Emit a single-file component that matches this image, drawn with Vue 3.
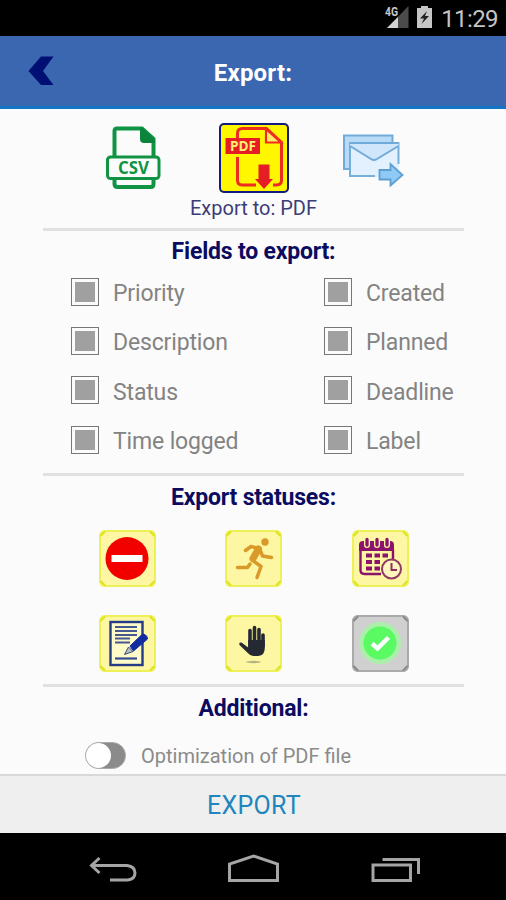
<template>
  <div class="screen">
    <div class="status-bar">
      <svg class="signal" width="26" height="24" viewBox="0 0 26 24">
        <path d="M24.500 0V22H3Z" fill="#4b4b4b" />
        <path d="M14 11V22H3Z" fill="#d4d4d4" />
        <text class="net" x="1" y="10" textLength="13" lengthAdjust="spacingAndGlyphs">4G</text>
      </svg>
      <svg class="battery" width="15" height="24" viewBox="0 0 15 24">
        <path d="M0 2H4V0H11V2H15V22H0Z" fill="#c6c6c6" />
        <path d="M10 5L3 12.5H7L4.500 18L12 10H8Z" fill="#222" />
      </svg>
      <span class="clock">11:29</span>
    </div>

    <header class="header">
      <button class="back-btn">
        <svg width="26" height="30" viewBox="0 0 26 30">
          <path d="M13 0.5H25.5L15 15L25.5 29H13L0.5 15Z" fill="#000f73" />
        </svg>
      </button>
      <h1>Export:</h1>
    </header>

    <main class="content">
      <section class="formats">
        <div class="format-row">
          <button class="format" :class="{ active: format === 'CSV' }" @click="format = 'CSV'">
            <svg width="70" height="70" viewBox="1 0 70 70">
              <path d="M15.5 34V8q0-2.500 2.500-2.500H43L54.500 16V34M15.500 57V61q0 3 3 3H52q2.500 0 2.500-3V57" fill="none" stroke="#109443" stroke-width="4" />
              <path d="M41 5H44L56 17V20H45q-4 0-4-4Z" fill="#0b853b" />
              <rect x="8.500" y="34" width="51.500" height="21.500" rx="3" fill="#fcfcfc" stroke="#109443" stroke-width="3" />
              <text class="csv" x="19" y="51" textLength="31" lengthAdjust="spacingAndGlyphs">CSV</text>
            </svg>
          </button>
          <button class="format" :class="{ active: format === 'PDF' }" @click="format = 'PDF'">
            <svg width="70" height="70" viewBox="0 0 70 70">
              <path d="M18.500 15V10q0-4.500 5-4.500H47.500L62.500 19.500V57q0 5-5 5H54M37 62H23q-4.500 0-4.500-5V34" fill="none" stroke="#ee2c20" stroke-width="3" />
              <path d="M47 6V19.500H62Z" fill="#ffe96b" stroke="#ee2c20" stroke-width="2.200" />
              <rect x="6.500" y="15" width="34.500" height="16" fill="#e51e25" />
              <text class="pdf" x="11" y="28" textLength="26" lengthAdjust="spacingAndGlyphs">PDF</text>
              <path d="M39.500 41.500H50.500V56H54L45 66L36 56H39.500Z" fill="#e51e25" />
            </svg>
          </button>
          <button class="format" :class="{ active: format === 'Email' }" @click="format = 'Email'">
            <svg width="70" height="70" viewBox="1 0 70 70">
              <path d="M12 46H7V12.500H55.500V19" fill="#b8daf7" stroke="#71abd9" stroke-width="2" />
              <rect x="13" y="20" width="49" height="34" fill="#e3f1fe" />
              <path d="M38 53H13V20H61.500V41" fill="none" stroke="#76afd9" stroke-width="2" />
              <path d="M13 20H61.500V23L40 36q-3 2-6 0L13 23Z" fill="#cfe6fb" />
              <path d="M13 23L34 36q3 2 6 0L61.500 23" fill="none" stroke="#70aad8" stroke-width="2" />
              <path d="M13 20H61.500" stroke="#70aad8" stroke-width="2" />
              <path d="M42.500 47H53.500V41L65.500 52L53.500 62.500V56.500H42.500Z" fill="#8fcaf7" stroke="#5e9fd0" stroke-width="1.800" />
            </svg>
          </button>
        </div>
        <p class="format-label">Export to: {{ format }}</p>
      </section>

      <section class="fields">
        <h2>Fields to export:</h2>
        <div class="field-grid">
          <div v-for="field in fields" :key="field.name" class="field" @click="field.checked = !field.checked">
            <span class="checkbox"><i v-if="field.checked"></i></span>
            <span class="field-name">{{ field.name }}</span>
          </div>
        </div>
      </section>

      <section class="statuses">
        <h2>Export statuses:</h2>
        <div class="status-grid">
          <button
            v-for="status in statuses"
            :key="status.id"
            class="status"
            :class="{ selected: status.selected }"
            @click="status.selected = !status.selected"
          >
            <svg width="57" height="57" viewBox="0 0 57 57">
              <path class="corners" d="M1.500 6L6 1.500M51 1.500L55.500 6M1.500 51L6 55.500M51 55.500L55.500 51" />
              <g v-if="status.id === 'blocked'">
                <circle cx="28" cy="28.500" r="21.500" fill="#f20000" />
                <rect x="12.500" y="25" width="31" height="7" fill="#fff" />
              </g>
              <g v-else-if="status.id === 'running'" fill="none" stroke="#d99a2a" stroke-width="3.500" stroke-linecap="round" stroke-linejoin="round">
                <circle cx="40" cy="12" r="3.700" fill="#d99a2a" stroke="none" />
                <path d="M20.500 20.500L26 16.500L34.500 18.500L37.500 26L46.500 27.500" />
                <path d="M33.500 19L28 28.500" stroke-width="7" />
                <path d="M27 30L36 36.500L32 47.500M25 34L22.500 37.500H12.500" />
              </g>
              <g v-else-if="status.id === 'planned'">
                <path d="M7 15q0-4 4-4H38q4 0 4 4V21H7Z" fill="#8b136c" />
                <path d="M8.500 20V40q0 4 4 4H29M41 20V29" fill="none" stroke="#8b136c" stroke-width="2.400" />
                <path d="M15 9.500V15M25 9.500V15M35 9.500V15" stroke="#fff6a6" stroke-width="6" stroke-linecap="round" />
                <path d="M15 9.500V15M25 9.500V15M35 9.500V15" stroke="#8b136c" stroke-width="3.300" stroke-linecap="round" />
                <path d="M14 25.500H20M22.500 25.500H28M30.500 25.500H36M14 32H20M22.500 32H28M14 38.500H20M22.500 38.500H28" stroke="#8b136c" stroke-width="4" />
                <circle cx="39.500" cy="39" r="9.500" fill="#fff6bf" stroke="#8c3c62" stroke-width="2" />
                <path d="M39.500 33V40H45" fill="none" stroke="#8b3059" stroke-width="2" />
              </g>
              <g v-else-if="status.id === 'draft'">
                <rect x="11.500" y="7" width="32" height="43" fill="#fffbc8" stroke="#263b87" stroke-width="2.400" />
                <path d="M16 12H38M16 16H38M16 20H38M16 23.500H31M16 27.500H31" stroke="#46588f" stroke-width="2" />
                <path d="M16 43.500H38" stroke="#334b8f" stroke-width="2.200" />
                <path d="M31 31L43 19.500q1.500-1 3.500.5t2 4L34.500 36Z" fill="#102ca0" stroke="#102ca0" />
                <path d="M25.500 39.500L29.500 32L34 36.500Z" fill="#b8bfc9" stroke="#344c7d" />
              </g>
              <g v-else-if="status.id === 'paused'">
                <path d="M25 31V15.500M29.500 28V12.500M34 28V14.500M38 31V20" stroke="#252932" stroke-width="3.600" stroke-linecap="round" />
                <path d="M23.200 25H39.800V33q0 7.500-6.500 8h-5q-3 0-5.500-3L14.500 30q-1-3 2-2.500l6.700 5Z" fill="#252932" />
                <ellipse cx="28.500" cy="47" rx="7.500" ry="1.200" fill="#b6b483" />
              </g>
              <g v-else>
                <circle cx="28" cy="28" r="21" fill="#aaf0aa" />
                <circle cx="28" cy="28" r="16.500" fill="#59fa62" />
                <path d="M20 28.500L25.500 33.500L36.500 22.500" fill="none" stroke="#fff" stroke-width="4.500" />
              </g>
            </svg>
          </button>
        </div>
      </section>

      <section class="additional">
        <h2>Additional:</h2>
        <div class="option">
          <span class="switch" :class="{ on: optimize }" @click="optimize = !optimize"></span>
          <span class="option-name">Optimization of PDF file</span>
        </div>
      </section>
    </main>

    <button class="export-btn">EXPORT</button>

    <nav class="nav-bar">
      <svg width="506" height="66" viewBox="0 0 506 66" fill="none" stroke="#a5a5a5" stroke-width="3">
        <path d="M99.500 24L91.500 31.500L99.500 39M92 31.500H127q8 1 8 7.500q0 6-7 7H110" />
        <path d="M229.500 46.500V30L253.500 22L277.500 30V46.500Z" />
        <path d="M373 31H410.500V46.500H373ZM382.500 25.500H418.500V40" />
      </svg>
    </nav>
  </div>
</template>

<script setup>
import { ref } from 'vue';

const format = ref('PDF');
const optimize = ref(false);

// listed row by row, two per row
const fields = ref([
  { name: 'Priority', checked: true },
  { name: 'Created', checked: true },
  { name: 'Description', checked: true },
  { name: 'Planned', checked: true },
  { name: 'Status', checked: true },
  { name: 'Deadline', checked: true },
  { name: 'Time logged', checked: true },
  { name: 'Label', checked: true }
]);

const statuses = ref([
  { id: 'blocked', selected: true },
  { id: 'running', selected: true },
  { id: 'planned', selected: true },
  { id: 'draft', selected: true },
  { id: 'paused', selected: true },
  { id: 'done', selected: false }
]);
</script>

<style>
body {
  margin: 0;
  background: #000;
}
</style>

<style scoped>
.screen {
  width: 506px;
  height: 900px;
  display: flex;
  flex-direction: column;
  background: #fbfbfb;
  font-family: Roboto, "Liberation Sans", sans-serif;
  overflow: hidden;
}

button {
  padding: 0;
  border: none;
  background: none;
  font-family: inherit;
  cursor: pointer;
}

svg {
  display: block;
}

.status-bar {
  height: 36px;
  flex-shrink: 0;
  box-sizing: border-box;
  padding-right: 8px;
  display: flex;
  align-items: center;
  justify-content: flex-end;
  background: #000;
}

.net {
  font-size: 12px;
  font-weight: 700;
  fill: #c8c8c8;
}

.battery {
  margin-left: 7px;
}

.clock {
  margin-left: 9px;
  padding-top: 2px;
  font-size: 24px;
  line-height: 34px;
  letter-spacing: -0.6px;
  color: #c4c4c4;
}

.header {
  height: 73px;
  flex-shrink: 0;
  box-sizing: border-box;
  display: grid;
  grid-template-columns: 80px 1fr 80px;
  align-items: center;
  background: #3b67b1;
  border-bottom: 3px solid #1475c5;
}

.back-btn {
  padding-left: 28px;
}

.header h1 {
  margin: 0;
  padding-top: 3px;
  text-align: center;
  font-size: 24px;
  line-height: 30px;
  font-weight: 700;
  letter-spacing: 0.2px;
  color: #fff;
}

.content {
  flex: 1;
  padding: 0 42px 0 43px;
}

.formats,
.fields,
.statuses {
  box-sizing: border-box;
  border-bottom: 3px solid #e1e1e1;
}

.formats {
  height: 122px;
  padding-top: 14px;
}

.format-row {
  display: flex;
  justify-content: center;
  gap: 49px;
}

.format {
  width: 70px;
  height: 70px;
}

.format.active {
  background: #fff700;
  border-radius: 5px;
  box-shadow: inset 0 0 0 2px #111b80;
}

.csv {
  font-family: "Open Sans", sans-serif;
  font-size: 17px;
  font-weight: 700;
  fill: #109443;
}

.pdf {
  font-family: "Open Sans", sans-serif;
  font-size: 15px;
  font-weight: 700;
  fill: #ffef6e;
}

.format-label {
  margin: 3px 0 0;
  text-align: center;
  font-size: 20px;
  line-height: 24px;
  color: #3c3c78;
}

h2 {
  margin: 0;
  text-align: center;
  font-size: 23px;
  line-height: 28px;
  font-weight: 700;
  letter-spacing: -0.2px;
  color: #0b0b5f;
}

.fields {
  height: 245px;
  padding-top: 7px;
}

.field-grid {
  display: grid;
  grid-template-columns: 253px 1fr;
  grid-auto-rows: 49.3px;
  padding: 1px 0 0 28px;
}

.field {
  display: flex;
  align-items: center;
  gap: 14px;
}

.checkbox {
  width: 28px;
  height: 28px;
  box-sizing: border-box;
  border: 1px solid #777;
  display: flex;
  align-items: center;
  justify-content: center;
}

.checkbox i {
  width: 20px;
  height: 20px;
  background: #a0a0a0;
}

.field-name {
  padding-top: 5px;
  font-size: 23px;
  line-height: 28px;
  letter-spacing: -0.15px;
  white-space: nowrap;
  color: #838383;
}

.statuses {
  height: 211px;
  padding-top: 8px;
}

.status-grid {
  display: grid;
  grid-template-columns: repeat(3, 126.5px);
  grid-auto-rows: 57px;
  justify-content: center;
  justify-items: center;
  row-gap: 28px;
  padding-top: 18px;
}

.status {
  width: 57px;
  height: 57px;
  box-sizing: border-box;
  border-radius: 6px;
  background: #d0d0d0;
  box-shadow: inset 0 0 0 2px #aaa;
}

.status.selected {
  background: #fdf6a2;
  box-shadow: inset 0 0 0 2px #eef05a;
}

.corners {
  fill: none;
  stroke: #888;
  stroke-width: 2px;
}

.status.selected .corners {
  stroke: #dde51a;
}

.additional {
  padding-top: 8px;
}

.option {
  display: flex;
  align-items: center;
  gap: 15px;
  padding: 19px 0 0 42px;
}

.switch {
  width: 41px;
  height: 27px;
  box-sizing: border-box;
  border: 1px solid #aaa;
  border-radius: 14px;
  background: #8b8b8b;
  display: flex;
}

.switch::before {
  content: "";
  width: 25px;
  height: 25px;
  border-radius: 50%;
  background: #fff;
}

.switch.on {
  justify-content: flex-end;
  background: #3b67b1;
}

.option-name {
  font-size: 20px;
  line-height: 24px;
  white-space: nowrap;
  color: #8a8a8a;
}

.export-btn {
  height: 59px;
  flex-shrink: 0;
  box-sizing: border-box;
  padding: 3px 0 0 2px;
  border-top: 2px solid #d9d9d9;
  background: #efefef;
  font-size: 25px;
  line-height: 30px;
  letter-spacing: 0.3px;
  color: #2086bd;
}

.nav-bar {
  height: 67px;
  flex-shrink: 0;
  box-sizing: border-box;
  padding-top: 1px;
  background: #000;
}
</style>
